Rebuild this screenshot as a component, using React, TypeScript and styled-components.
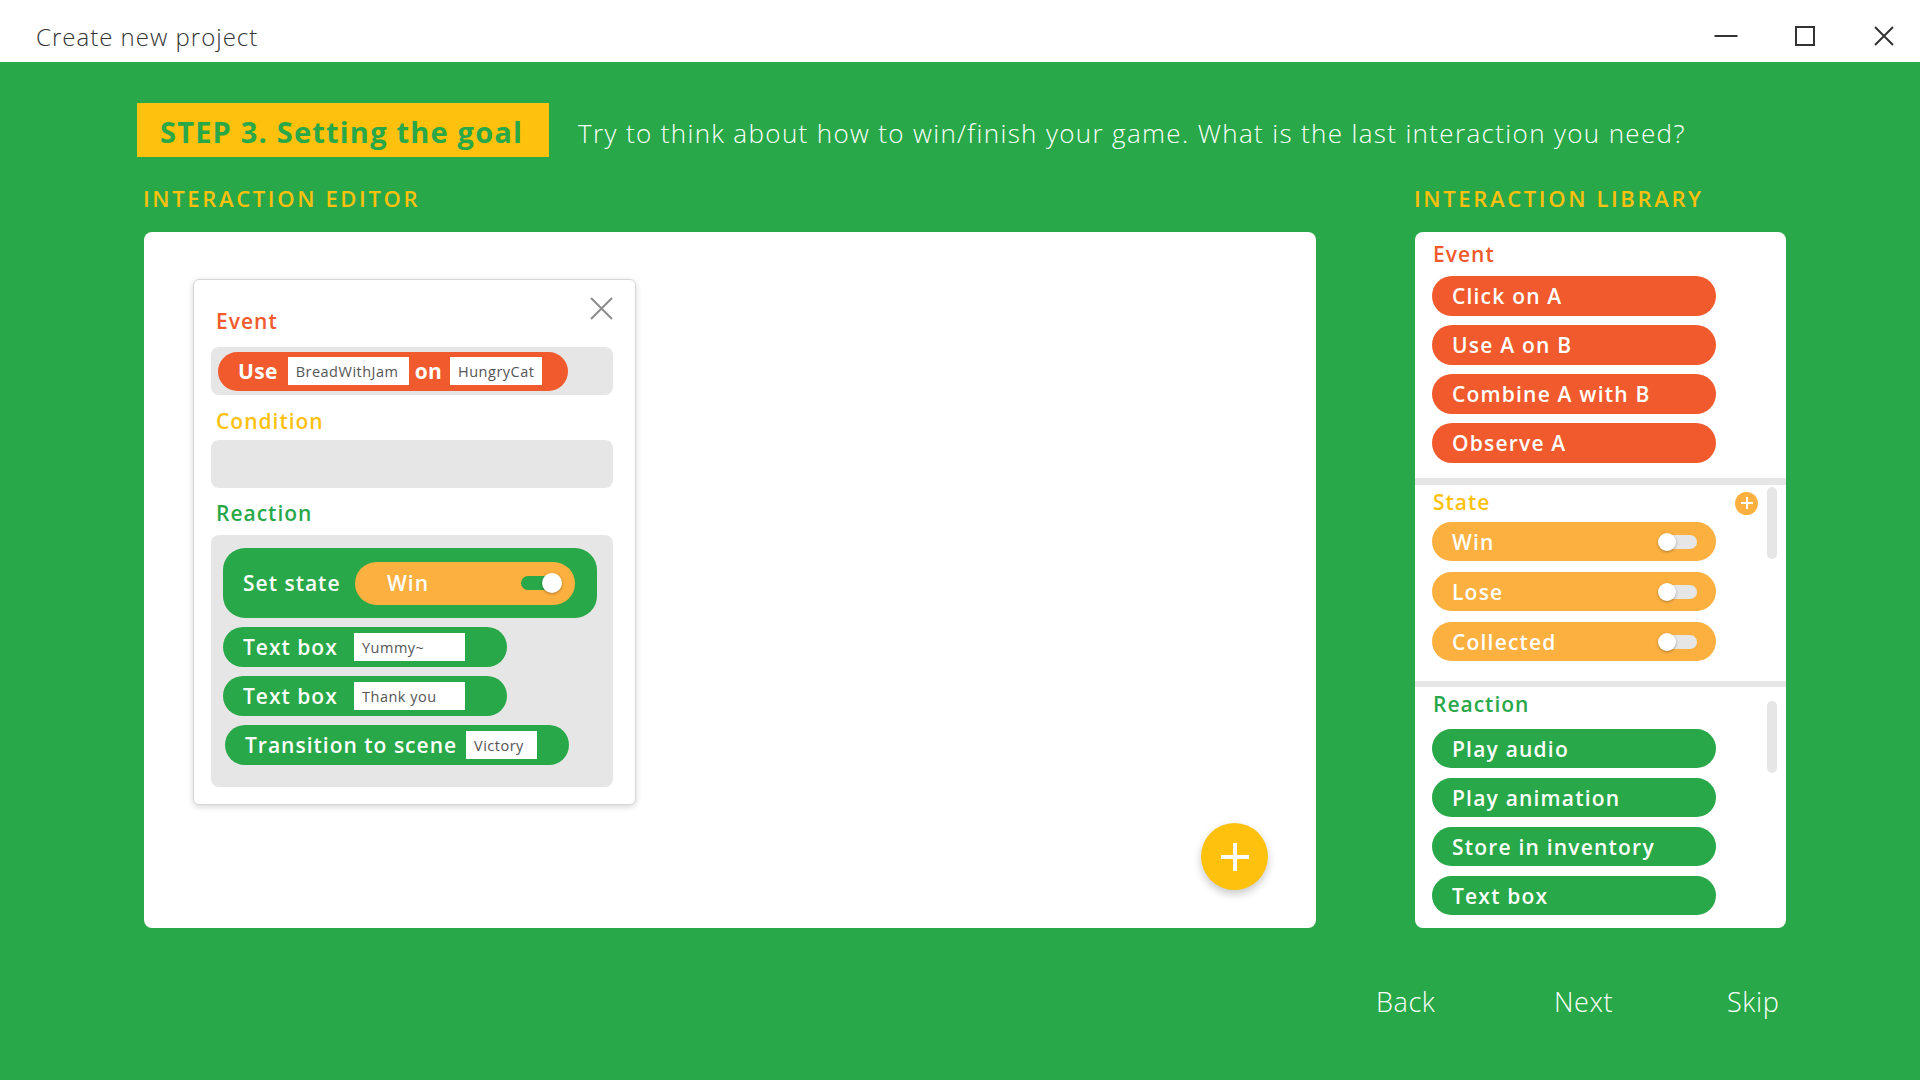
import React from "react";
import styled, { createGlobalStyle } from "styled-components";

const GREEN = "#28a848";
const YELLOW = "#fdc10e";
const ORANGE = "#f15a2c";
const AMBER = "#fbb040";
const GREY = "#e6e6e6";
const FONT = `"Open Sans", "Liberation Sans", sans-serif`;

const GlobalStyle = createGlobalStyle`
  html, body { margin: 0; padding: 0; }
  body { font-family: ${FONT}; }
  * { box-sizing: border-box; }
`;

const Window = styled.div`
  width: 1920px;
  height: 1080px;
  display: flex;
  flex-direction: column;
  overflow: hidden;
  background: #fff;
`;

/* ---------- title bar ---------- */

const TitleBar = styled.header`
  height: 62px;
  flex: none;
  display: flex;
  justify-content: space-between;
  padding-left: 36px;
`;

const TitleText = styled.h1`
  margin: 0;
  padding-top: 21px;
  font-size: 24px;
  font-weight: 300;
  line-height: 32px;
  letter-spacing: 1px;
  color: #333;
`;

const WindowControls = styled.div`
  display: flex;
  gap: 7px;
  padding-top: 24px;
`;

const ControlButton = styled.button`
  width: 72px;
  height: 24px;
  border: 0;
  padding: 0;
  background: none;
  display: flex;
  align-items: center;
  justify-content: center;
  cursor: pointer;
`;

/* ---------- main area ---------- */

const Main = styled.main`
  flex: 1;
  background: ${GREEN};
  padding: 41px 0 0 137px;
  display: flex;
  flex-direction: column;
`;

const StepRow = styled.div`
  display: flex;
  align-items: center;
  gap: 29px;
`;

const StepBadge = styled.div`
  height: 54px;
  padding: 4px 26px 0 23px;
  background: ${YELLOW};
  color: ${GREEN};
  font-size: 29px;
  font-weight: 700;
  line-height: 50px;
  letter-spacing: 1.2px;
  white-space: nowrap;
`;

const StepHint = styled.p`
  margin: 6px 0 0;
  font-size: 26px;
  font-weight: 300;
  letter-spacing: 1.35px;
  color: #fff;
  white-space: nowrap;
`;

const Workspace = styled.div`
  display: flex;
  gap: 99px;
  margin-top: 28px;
  padding-left: 7px;
`;

const Column = styled.section<{ $width: number }>`
  width: ${(p) => p.$width}px;
  display: flex;
  flex-direction: column;
`;

const SectionHeading = styled.h2`
  margin: 0 0 21px -1px;
  font-size: 22px;
  font-weight: 600;
  line-height: 26px;
  letter-spacing: 2.65px;
  color: ${YELLOW};
  white-space: nowrap;
`;

/* ---------- editor ---------- */

const EditorPanel = styled.div`
  position: relative;
  height: 696px;
  background: #fff;
  border-radius: 8px;
  padding: 47px 0 0 49px;
`;

const InteractionCard = styled.div`
  position: relative;
  width: 443px;
  background: #fff;
  border: 1px solid #d6d6d6;
  border-radius: 6px;
  box-shadow: 0 2px 6px rgba(0, 0, 0, 0.16);
  padding: 29px 22px 17px 17px;
`;

const CardClose = styled.button`
  position: absolute;
  top: 17px;
  right: 22px;
  width: 23px;
  height: 23px;
  padding: 0;
  border: 0;
  background: none;
  cursor: pointer;
`;

const CardLabel = styled.div<{ $color: string; $mt?: number; $mb: number }>`
  margin: ${(p) => p.$mt ?? 0}px 0 ${(p) => p.$mb}px;
  padding-left: 5px;
  font-size: 21px;
  font-weight: 600;
  line-height: 24px;
  letter-spacing: 1px;
  color: ${(p) => p.$color};
`;

const Slot = styled.div`
  height: 48px;
  background: ${GREY};
  border-radius: 8px;
  display: flex;
  align-items: center;
  padding: 0 7px;
`;

const ReactionSlot = styled.div`
  background: ${GREY};
  border-radius: 8px;
  display: flex;
  flex-direction: column;
  align-items: flex-start;
  gap: 9px;
  padding: 13px 16px 22px 12px;
`;

const EventPill = styled.div`
  height: 39px;
  border-radius: 20px;
  background: ${ORANGE};
  color: #fff;
  display: flex;
  align-items: center;
  gap: 6px;
  padding: 0 26px 0 20px;
  font-size: 21px;
  font-weight: 700;
  letter-spacing: 0.3px;
  white-space: nowrap;
`;

const PillWord = styled.span<{ $mr?: number }>`
  margin-right: ${(p) => p.$mr ?? 0}px;
`;

const SlotInput = styled.span<{ $w: number }>`
  width: ${(p) => p.$w}px;
  height: 28px;
  flex: none;
  background: #fff;
  color: #555;
  font-size: 14.5px;
  font-weight: 400;
  letter-spacing: 0.5px;
  display: flex;
  align-items: center;
  padding: 0 8px;
  overflow: hidden;
`;

const SetStateBlock = styled.div`
  width: 374px;
  height: 70px;
  border-radius: 22px;
  background: ${GREEN};
  color: #fff;
  display: flex;
  align-items: center;
  justify-content: space-between;
  padding: 0 22px 0 20px;
  font-size: 21px;
  font-weight: 600;
  letter-spacing: 1px;
`;

const StatePill = styled.div`
  width: 220px;
  height: 43px;
  border-radius: 22px;
  background: ${AMBER};
  display: flex;
  align-items: center;
  justify-content: space-between;
  padding: 0 16px 0 32px;
`;

const ActionPill = styled.div<{ $width: number; $pr: number; $ml?: number }>`
  width: ${(p) => p.$width}px;
  height: 40px;
  margin-left: ${(p) => p.$ml ?? 0}px;
  border-radius: 20px;
  background: ${GREEN};
  color: #fff;
  display: flex;
  align-items: center;
  justify-content: space-between;
  padding: 0 ${(p) => p.$pr}px 0 20px;
  font-size: 21px;
  font-weight: 600;
  letter-spacing: 1px;
  white-space: nowrap;
`;

const Toggle = styled.span<{ $on: boolean }>`
  position: relative;
  flex: none;
  width: 38px;
  height: 14px;
  border-radius: 7px;
  background: ${(p) => (p.$on ? GREEN : GREY)};

  &::after {
    content: "";
    position: absolute;
    top: 50%;
    ${(p) => (p.$on ? "right: -3px;" : "left: -1px;")}
    width: ${(p) => (p.$on ? 20 : 18)}px;
    height: ${(p) => (p.$on ? 20 : 18)}px;
    transform: translateY(-50%);
    border-radius: 50%;
    background: #fff;
    box-shadow: 0 1px 3px rgba(0, 0, 0, 0.3);
  }
`;

const Fab = styled.button`
  position: absolute;
  right: 48px;
  bottom: 38px;
  width: 67px;
  height: 67px;
  border: 0;
  padding: 0;
  border-radius: 50%;
  background: ${YELLOW};
  box-shadow: 0 4px 9px rgba(0, 0, 0, 0.22);
  display: flex;
  align-items: center;
  justify-content: center;
  cursor: pointer;
`;

/* ---------- library ---------- */

const LibraryPanel = styled.div`
  height: 696px;
  background: #fff;
  border-radius: 8px;
  overflow: hidden;
  display: flex;
  flex-direction: column;
`;

const LibSection = styled.div<{ $pad: string }>`
  position: relative;
  padding: ${(p) => p.$pad};
`;

const LibHeader = styled.div<{ $color: string; $mb: number }>`
  height: 24px;
  margin-bottom: ${(p) => p.$mb}px;
  padding-left: 1px;
  display: flex;
  align-items: center;
  justify-content: space-between;
  font-size: 21px;
  font-weight: 600;
  line-height: 24px;
  letter-spacing: 1px;
  color: ${(p) => p.$color};
`;

const PillList = styled.div<{ $gap: number }>`
  display: flex;
  flex-direction: column;
  gap: ${(p) => p.$gap}px;
`;

const LibPill = styled.div<{ $bg: string; $h: number }>`
  width: 284px;
  height: ${(p) => p.$h}px;
  border-radius: ${(p) => p.$h / 2}px;
  background: ${(p) => p.$bg};
  color: #fff;
  display: flex;
  align-items: center;
  justify-content: space-between;
  padding: 0 19px 0 20px;
  font-size: 21px;
  font-weight: 600;
  letter-spacing: 1.2px;
  white-space: nowrap;
`;

const Divider = styled.div<{ $h: number }>`
  height: ${(p) => p.$h}px;
  flex: none;
  background: ${GREY};
`;

const ScrollThumb = styled.div<{ $top: number }>`
  position: absolute;
  top: ${(p) => p.$top}px;
  right: 9px;
  width: 10px;
  height: 72px;
  border-radius: 5px;
  background: ${GREY};
`;

const AddBadge = styled.button`
  width: 23px;
  height: 23px;
  margin: 2px 11px 0 0;
  padding: 0;
  border: 0;
  border-radius: 50%;
  background: ${AMBER};
  display: flex;
  align-items: center;
  justify-content: center;
  cursor: pointer;
`;

/* ---------- footer ---------- */

const Footer = styled.nav`
  display: grid;
  grid-template-columns: 178px 173px 60px;
  justify-content: end;
  padding-right: 133px;
  margin-top: 58px;
`;

const FooterLink = styled.button`
  padding: 0;
  border: 0;
  background: none;
  text-align: left;
  color: #fff;
  font-family: ${FONT};
  font-size: 27px;
  font-weight: 300;
  line-height: 32px;
  letter-spacing: 0.6px;
  cursor: pointer;
`;

const Plus = ({ size, stroke }: { size: number; stroke: number }) => (
  <svg width={size} height={size} viewBox={`0 0 ${size} ${size}`}>
    <path d={`M${size / 2} 0V${size}M0 ${size / 2}H${size}`} stroke="#fff" strokeWidth={stroke} />
  </svg>
);

const eventItems = ["Click on A", "Use A on B", "Combine A with B", "Observe A"];
const stateItems = ["Win", "Lose", "Collected"];
const reactionItems = ["Play audio", "Play animation", "Store in inventory", "Text box"];

export default function App() {
  return (
    <Window>
      <GlobalStyle />
      <TitleBar>
        <TitleText>Create new project</TitleText>
        <WindowControls>
          <ControlButton aria-label="minimize">
            <svg width="24" height="24" viewBox="0 0 24 24">
              <path d="M0.5 12H23.5" stroke="#333" strokeWidth="2" />
            </svg>
          </ControlButton>
          <ControlButton aria-label="maximize">
            <svg width="20" height="20" viewBox="0 0 20 20">
              <rect x="1" y="1" width="18" height="18" fill="none" stroke="#333" strokeWidth="2" />
            </svg>
          </ControlButton>
          <ControlButton aria-label="close">
            <svg width="20" height="20" viewBox="0 0 20 20">
              <path d="M1 1L19 19M19 1L1 19" stroke="#333" strokeWidth="2" />
            </svg>
          </ControlButton>
        </WindowControls>
      </TitleBar>

      <Main>
        <StepRow>
          <StepBadge>STEP 3. Setting the goal</StepBadge>
          <StepHint>Try to think about how to win/finish your game. What is the last interaction you need?</StepHint>
        </StepRow>

        <Workspace>
          <Column $width={1172}>
            <SectionHeading>INTERACTION EDITOR</SectionHeading>
            <EditorPanel>
              <InteractionCard>
                <CardClose aria-label="close card">
                  <svg width="23" height="23" viewBox="0 0 23 23">
                    <path d="M1 1L22 22M22 1L1 22" stroke="#8c8c8c" strokeWidth="2" />
                  </svg>
                </CardClose>

                <CardLabel $color={ORANGE} $mb={14}>Event</CardLabel>
                <Slot>
                  <EventPill>
                    <PillWord $mr={4}>Use</PillWord>
                    <SlotInput $w={121}>BreadWithJam</SlotInput>
                    <PillWord $mr={2}>on</PillWord>
                    <SlotInput $w={92}>HungryCat</SlotInput>
                  </EventPill>
                </Slot>

                <CardLabel $color={YELLOW} $mt={14} $mb={7}>Condition</CardLabel>
                <Slot />

                <CardLabel $color={GREEN} $mt={13} $mb={10}>Reaction</CardLabel>
                <ReactionSlot>
                  <SetStateBlock>
                    <span>Set state</span>
                    <StatePill>
                      <span>Win</span>
                      <Toggle $on />
                    </StatePill>
                  </SetStateBlock>
                  <ActionPill $width={284} $pr={42}>
                    <span>Text box</span>
                    <SlotInput $w={111}>Yummy~</SlotInput>
                  </ActionPill>
                  <ActionPill $width={284} $pr={42}>
                    <span>Text box</span>
                    <SlotInput $w={111}>Thank you</SlotInput>
                  </ActionPill>
                  <ActionPill $width={344} $pr={32} $ml={2}>
                    <span>Transition to scene</span>
                    <SlotInput $w={71}>Victory</SlotInput>
                  </ActionPill>
                </ReactionSlot>
              </InteractionCard>

              <Fab aria-label="add interaction">
                <Plus size={28} stroke={4} />
              </Fab>
            </EditorPanel>
          </Column>

          <Column $width={371}>
            <SectionHeading>INTERACTION LIBRARY</SectionHeading>
            <LibraryPanel>
              <LibSection $pad="10px 17px 15px">
                <LibHeader $color={ORANGE} $mb={10}>Event</LibHeader>
                <PillList $gap={9}>
                  {eventItems.map((item) => (
                    <LibPill key={item} $bg={ORANGE} $h={40}>{item}</LibPill>
                  ))}
                </PillList>
              </LibSection>
              <Divider $h={7} />
              <LibSection $pad="5px 17px 20px">
                <ScrollThumb $top={2} />
                <LibHeader $color={YELLOW} $mb={8}>
                  <span>State</span>
                  <AddBadge aria-label="add state">
                    <Plus size={12} stroke={2} />
                  </AddBadge>
                </LibHeader>
                <PillList $gap={11}>
                  {stateItems.map((item) => (
                    <LibPill key={item} $bg={AMBER} $h={39}>
                      <span>{item}</span>
                      <Toggle $on={false} />
                    </LibPill>
                  ))}
                </PillList>
              </LibSection>
              <Divider $h={6} />
              <LibSection $pad="5px 17px 0">
                <ScrollThumb $top={14} />
                <LibHeader $color={GREEN} $mb={13}>Reaction</LibHeader>
                <PillList $gap={10}>
                  {reactionItems.map((item) => (
                    <LibPill key={item} $bg={GREEN} $h={39}>{item}</LibPill>
                  ))}
                </PillList>
              </LibSection>
            </LibraryPanel>
          </Column>
        </Workspace>

        <Footer>
          <FooterLink>Back</FooterLink>
          <FooterLink>Next</FooterLink>
          <FooterLink>Skip</FooterLink>
        </Footer>
      </Main>
    </Window>
  );
}
